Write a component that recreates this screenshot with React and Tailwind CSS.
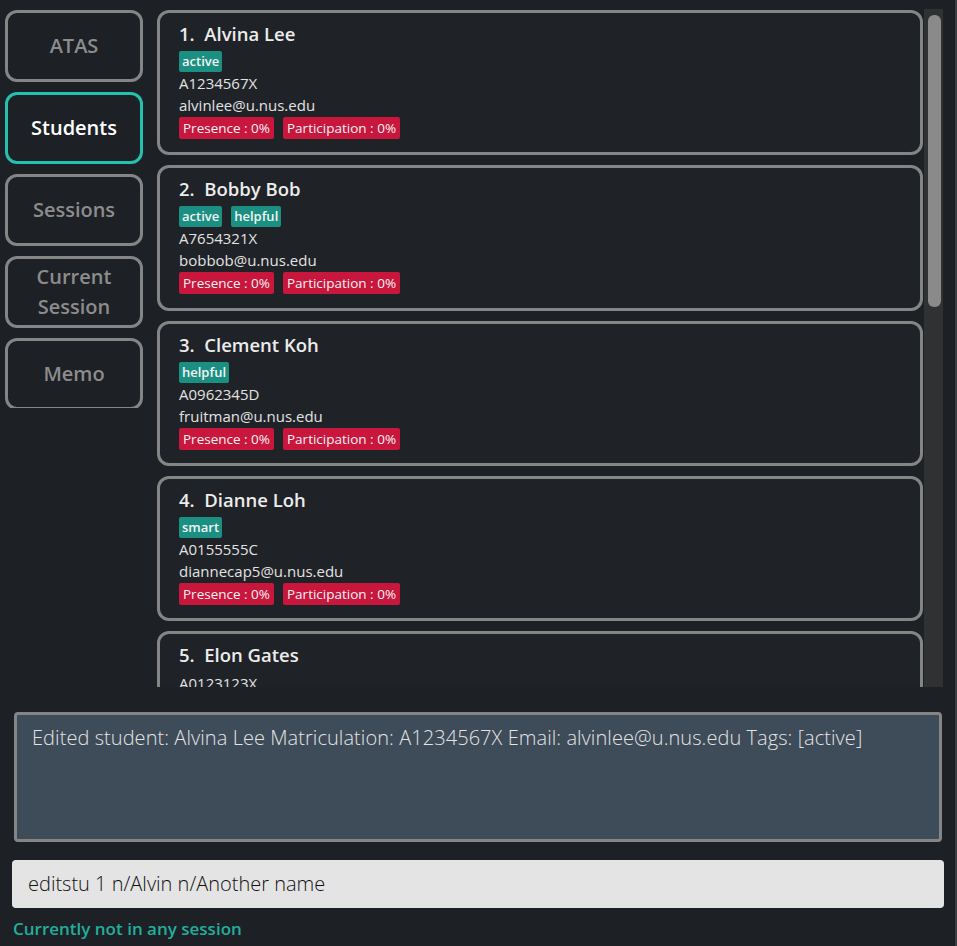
import React from 'react';

const students = [
  { name: 'Alvina Lee', tags: ['active'], matric: 'A1234567X', email: 'alvinlee@u.nus.edu' },
  { name: 'Bobby Bob', tags: ['active', 'helpful'], matric: 'A7654321X', email: 'bobbob@u.nus.edu' },
  { name: 'Clement Koh', tags: ['helpful'], matric: 'A0962345D', email: 'fruitman@u.nus.edu' },
  { name: 'Dianne Loh', tags: ['smart'], matric: 'A0155555C', email: 'diannecap5@u.nus.edu' },
  { name: 'Elon Gates', tags: [], matric: 'A0123123X', email: null },
];

const tabs = [
  { label: 'ATAS' },
  { label: 'Students', active: true },
  { label: 'Sessions' },
  { label: 'Current\nSession' },
  { label: 'Memo' },
];

const font = { fontFamily: '"Open Sans", "Noto Sans", sans-serif' };

const StudentCard = ({ student, idx }) => (
  <div className="shrink-0 h-[145.25px] rounded-[12px] border-[3px] border-[#858585] bg-[#1f2227] pl-[19px] pt-[9px] overflow-hidden">
    <div className="text-[18.5px] leading-[24px] font-semibold text-[#ececec]">
      {idx + 1}.&nbsp;&nbsp;{student.name}
    </div>
    {student.tags.length > 0 ? (
      <div className="flex gap-[9px] mt-[5px]">
        {student.tags.map((t) => (
          <span key={t} className="h-[21px] px-[3px] rounded-[2px] bg-[#1a8f82] text-[#f4f4f4] text-[13px] leading-[21px] font-semibold">
            {t}
          </span>
        ))}
      </div>
    ) : (
      <div className="h-[5px]" />
    )}
    <div className="text-[15px] leading-[22px] text-[#e2e2e2]">{student.matric}</div>
    {student.email && (
      <>
        <div className="text-[15px] leading-[22px] text-[#e2e2e2]">{student.email}</div>
        <div className="flex gap-[9px] mt-[1px]">
          <span className="h-[22px] px-[4px] rounded-[2px] bg-[#c8163d] text-[#f4f4f4] text-[13.5px] leading-[22px] font-medium">Presence : 0%</span>
          <span className="h-[22px] px-[4px] rounded-[2px] bg-[#c8163d] text-[#f4f4f4] text-[13.5px] leading-[22px] font-medium">Participation : 0%</span>
        </div>
      </>
    )}
  </div>
);

export default function App() {
  return (
    <div className="w-[957px] h-[946px] bg-[#1d2025] overflow-hidden border-r-2 border-[#3a3d42]" style={font}>
      <div className="flex h-[687px] pt-[10px]">
        <div className="w-[138px] ml-[5px] h-[398px] overflow-hidden flex flex-col gap-[10px]">
          {tabs.map((t) => (
            <div
              key={t.label}
              className={
                t.active
                  ? 'shrink-0 h-[72px] rounded-[12px] border-[3px] border-[#22c1b0] flex items-center justify-center text-center text-[20px] leading-[30px] font-semibold text-white whitespace-pre-line'
                  : 'shrink-0 h-[72px] rounded-[12px] border-[3px] border-[#858585] flex items-center justify-center text-center text-[20px] leading-[30px] font-semibold text-[#8c8c8c] whitespace-pre-line'
              }
            >
              {t.label}
            </div>
          ))}
        </div>
        <div className="ml-[14px] w-[766px] flex flex-col gap-[10px] overflow-hidden">
          {students.map((s, i) => (
            <StudentCard key={s.name} student={s} idx={i} />
          ))}
        </div>
        <div className="w-[19px] ml-[1px] -mt-[1px] bg-[#303133] pl-[4px] pr-[2px] pt-[6px]">
          <div className="h-[292px] rounded-[6px] bg-[#8a8a8a]" />
        </div>
      </div>
      <div className="mt-[25px] ml-[14px] w-[928px] h-[130px] rounded-[4px] border-[3px] border-[#858585] bg-[#3e4b59] px-[15px] pt-[8px] text-[20px] leading-[30px] font-light tracking-[0.06px] text-[#e4e4e4]">
        Edited student: Alvina Lee Matriculation: A1234567X Email: alvinlee@u.nus.edu Tags: [active]
      </div>
      <div className="mt-[18px] ml-[12px] w-[932px] h-[48px] rounded-[4px] bg-[#e4e4e4] px-[16px] flex items-center text-[20px] font-light text-[#111]">
        editstu 1 n/Alvin n/Another name
      </div>
      <div className="mt-[9px] ml-[13px] text-[17px] leading-[24px] font-semibold text-[#22ae9d]">
        Currently not in any session
      </div>
    </div>
  );
}
